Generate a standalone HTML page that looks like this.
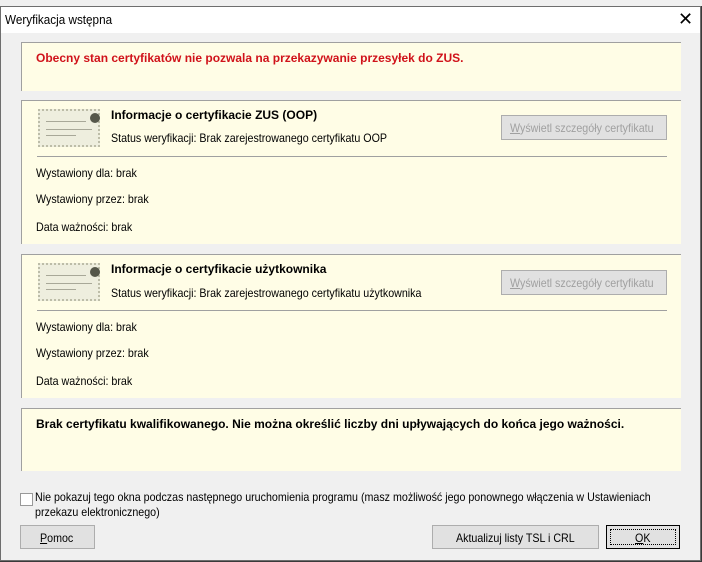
<!DOCTYPE html>
<html><head><meta charset="utf-8"><style>
*{margin:0;padding:0;box-sizing:border-box}
body{width:702px;height:562px;background:#3a3a3a;position:relative;overflow:hidden;font-family:"Liberation Sans",sans-serif;font-size:12px;color:#000}
.win{position:absolute;left:0;top:6px;width:701px;height:555px;background:#f0f0f0;border:1px solid #6e6e6e}
.title{position:absolute;left:0;top:0;width:100%;height:26px;background:#fff}
.t{position:absolute;white-space:nowrap;transform:scaleX(0.89);transform-origin:left top;line-height:14px}
.b{font-weight:bold;transform:scaleX(1.0)}
.panel{position:absolute;left:20px;width:660px;background:#fffde6;border-top:1px solid #a0a0a0;border-left:1px solid #a0a0a0}
.btn{position:absolute;background:#e1e1e1;border:1px solid #adadad;text-align:center}
.sep{position:absolute;left:15px;width:630px;height:1px;background:#a0a0a0}
.cert{position:absolute;left:16px;width:62px;height:38px;background:#eeeede;border:2px dotted #bdbda8}
.cert i{position:absolute;right:-2px;top:2px;width:10px;height:10px;border-radius:50%;background:#55574a}
.cert b{position:absolute;left:6px;height:1px;background:#a8a898}
</style></head><body>
<div style="position:absolute;left:0;top:0;width:702px;height:6px;background:#f0f0f0"></div>
<div class="win">
<div class="title"><span class="t" style="left:4px;top:6px;font-size:13px;transform:scaleX(0.9)">Weryfikacja wstępna</span>
<span style="position:absolute;left:677px;top:2px;font-size:18px;line-height:20px">✕</span></div>

<div class="panel" style="top:35px;height:49px"><span class="t b" style="left:14px;top:8px;color:#d0121a">Obecny stan certyfikatów nie pozwala na przekazywanie przesyłek do ZUS.</span></div>

<div class="panel" style="top:93px;height:144px">
<div class="cert" style="top:8px"><b style="top:10px;width:40px"></b><b style="top:18px;width:46px"></b><b style="top:24px;width:30px"></b><i></i></div>
<span class="t b" style="left:89px;top:7px">Informacje o certyfikacie ZUS (OOP)</span>
<span class="t" style="left:89px;top:30px">Status weryfikacji: Brak zarejestrowanego certyfikatu OOP</span>
<div class="btn" style="left:479px;top:14px;width:166px;height:25px;color:#a0a0a0"><span class="t" style="left:8px;top:5px"><u>W</u>yświetl szczegóły certyfikatu</span></div>
<div class="sep" style="top:55px"></div>
<span class="t" style="left:14px;top:65px">Wystawiony dla: brak</span>
<span class="t" style="left:14px;top:91px">Wystawiony przez: brak</span>
<span class="t" style="left:14px;top:119px">Data ważności: brak</span>
</div>

<div class="panel" style="top:247px;height:144px">
<div class="cert" style="top:8px"><b style="top:10px;width:40px"></b><b style="top:18px;width:46px"></b><b style="top:24px;width:30px"></b><i></i></div>
<span class="t b" style="left:89px;top:7px">Informacje o certyfikacie użytkownika</span>
<span class="t" style="left:89px;top:31px">Status weryfikacji: Brak zarejestrowanego certyfikatu użytkownika</span>
<div class="btn" style="left:479px;top:15px;width:166px;height:25px;color:#a0a0a0"><span class="t" style="left:8px;top:5px"><u>W</u>yświetl szczegóły certyfikatu</span></div>
<div class="sep" style="top:55px"></div>
<span class="t" style="left:14px;top:65px">Wystawiony dla: brak</span>
<span class="t" style="left:14px;top:91px">Wystawiony przez: brak</span>
<span class="t" style="left:14px;top:119px">Data ważności: brak</span>
</div>

<div class="panel" style="top:401px;height:63px"><span class="t b" style="left:14px;top:8px">Brak certyfikatu kwalifikowanego. Nie można określić liczby dni upływających do końca jego ważności.</span></div>

<div style="position:absolute;left:19px;top:486px;width:13px;height:13px;background:#fff;border:1px solid #999"></div>
<span class="t" style="left:34px;top:483px;line-height:15px">Nie pokazuj tego okna podczas następnego uruchomienia programu (masz możliwość jego ponownego włączenia w Ustawieniach<br>przekazu elektronicznego)</span>

<div class="btn" style="left:19px;top:518px;width:75px;height:24px"><span class="t" style="left:19px;top:5px"><u>P</u>omoc</span></div>
<div class="btn" style="left:431px;top:518px;width:167px;height:24px"><span class="t" style="left:23px;top:5px">Aktualizuj listy TSL i CRL</span></div>
<div class="btn" style="left:605px;top:518px;width:74px;height:24px;border:1px solid #000"><div style="position:absolute;left:3px;top:3px;right:3px;bottom:3px;border:1px dotted #000"></div><span class="t" style="left:28px;top:5px"><u>O</u>K</span></div>
</div>
</body></html>
